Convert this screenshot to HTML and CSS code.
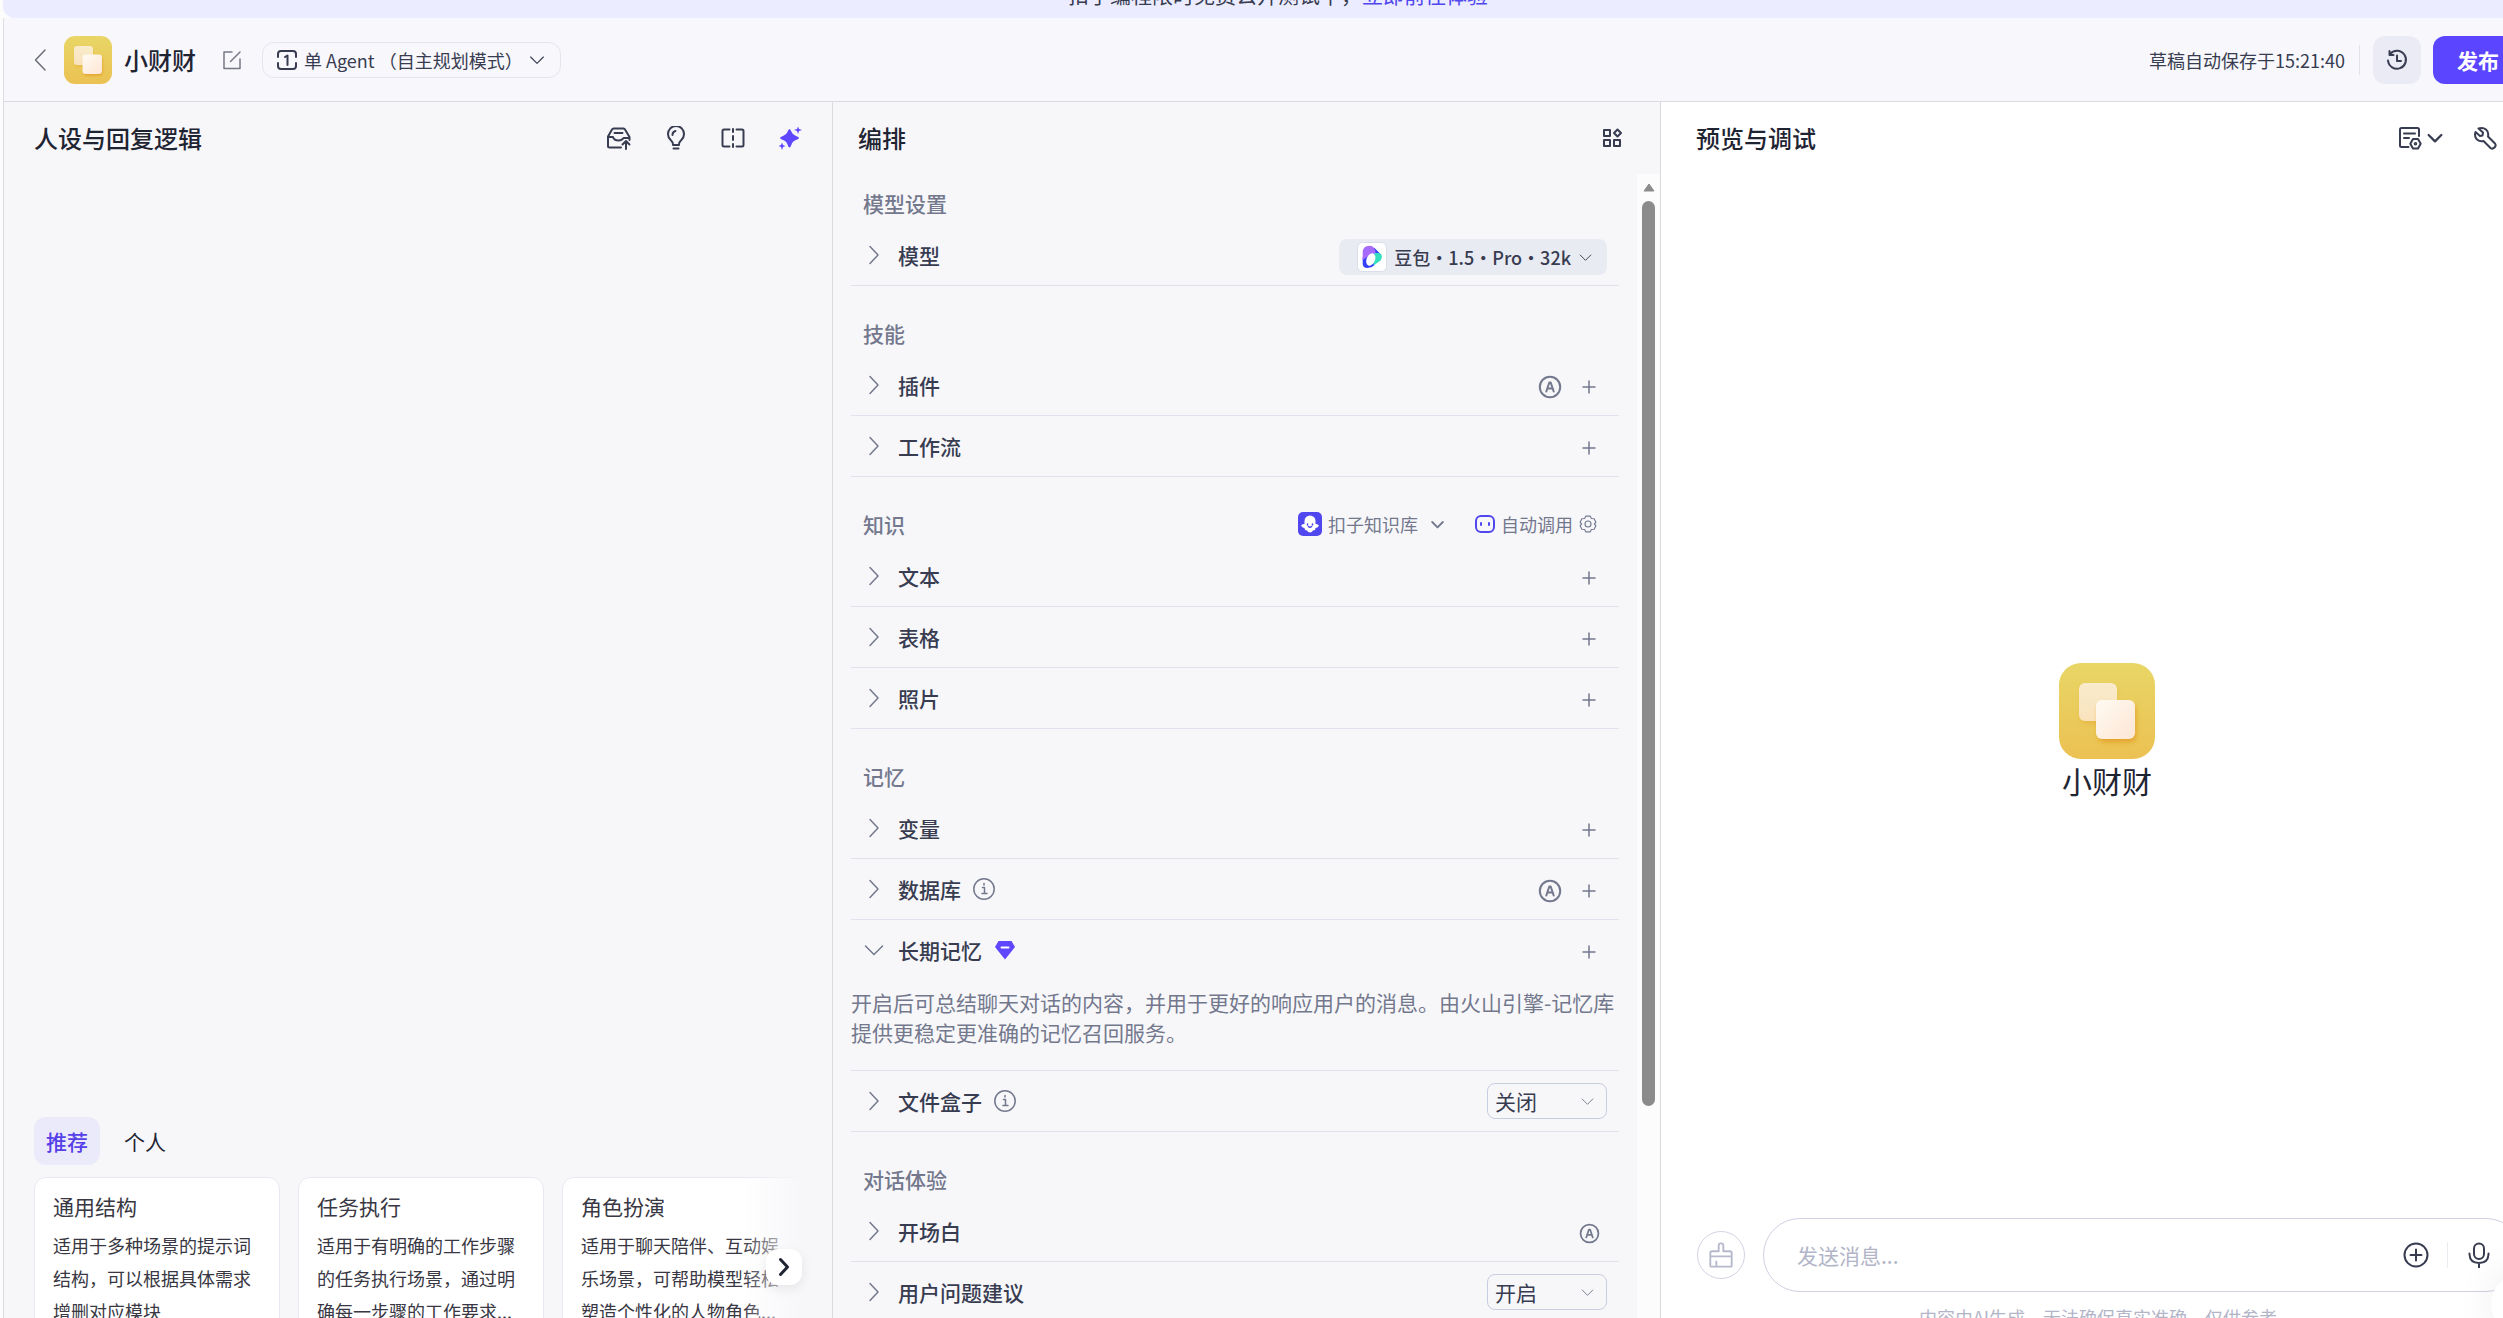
FILE: index.html
```html
<!DOCTYPE html>
<html lang="zh-CN">
<head>
    <meta charset="UTF-8">
    <meta name="viewport" content="width=device-width, initial-scale=1.0">
    <title>小财财</title>
    <link rel="stylesheet" href="styles.css">
</head>
<body>
<!-- shared icons -->
<svg class="sprite" aria-hidden="true">
    <symbol id="right" viewBox="0 0 24 24"><path d="M8 3.500L16 12L8 20.500"/></symbol>
    <symbol id="down" viewBox="0 0 24 24"><path d="M3.500 8L12 16.500L20.500 8"/></symbol>
    <symbol id="plus" viewBox="0 0 24 24"><path d="M12 6v12M6 12h12"/></symbol>
    <symbol id="auto" viewBox="0 0 24 24"><circle cx="12" cy="12" r="10.200"/><path d="M8.300 16.500L11.300 7.500h1.400L15.700 16.500M9.500 13.500h5"/></symbol>
    <symbol id="info" viewBox="0 0 24 24"><circle cx="12" cy="12" r="10.200"/><path d="M10.500 10.500H12.500V16.500M10 16.500h5M12 6.500v1.600"/></symbol>
    <symbol id="bot" viewBox="0 0 96 96">
        <rect width="96" height="96" rx="22" fill="url(#gold)" stroke="none"/>
        <rect x="22" y="24" width="36" height="37" rx="6" fill="#e59a20" stroke="none" opacity=".35" filter="url(#soft)"/>
        <rect x="20" y="20" width="38" height="38" rx="6" fill="url(#cream)" stroke="none"/>
        <rect x="39" y="41" width="38" height="38" rx="6" fill="#e08a10" stroke="none" opacity=".6" filter="url(#soft)"/>
        <rect x="37" y="37" width="39" height="39" rx="6" fill="url(#milk)" stroke="none"/>
    </symbol>
    <defs>
        <linearGradient id="gold" x1="0" y1="0" x2="0" y2="1"><stop offset="0" stop-color="#e8d666"/><stop offset="1" stop-color="#ebc152"/></linearGradient>
        <linearGradient id="cream" x1="0" y1="0" x2="0" y2="1"><stop offset="0" stop-color="#f8ebcb"/><stop offset="1" stop-color="#f9e3bd"/></linearGradient>
        <linearGradient id="milk" x1="0" y1="0" x2="1" y2="1"><stop offset="0" stop-color="#fffaf3"/><stop offset="1" stop-color="#fde6d4"/></linearGradient>
        <filter id="soft" x="-30%" y="-30%" width="160%" height="160%"><feGaussianBlur stdDeviation="2.500"/></filter>
    </defs>
</svg>

<div class="page">
    <div class="banner">扣子编程限时免费公开测试中，<a href="#">立即前往体验</a></div>

    <header class="topbar">
        <button class="icon-btn back" aria-label="返回"><svg class="icon" viewBox="0 0 24 24"><path d="M17 2L7.500 12L17 22"/></svg></button>
        <svg class="logo"><use href="#bot"/></svg>
        <h1>小财财</h1>
        <button class="icon-btn edit" aria-label="编辑"><svg class="icon" viewBox="0 0 24 24"><path d="M12 4H4v16.500h16V11M10.500 13.500L20 4"/></svg></button>
        <button class="mode">
            <svg class="icon thick" viewBox="0 0 24 24"><path d="M3 9V6a3 3 0 0 1 3-3h12a3 3 0 0 1 3 3v3M3 15v3a3 3 0 0 0 3 3h12a3 3 0 0 0 3-3v-3M10 9l2.500-1.500V17"/></svg>
            <span>单 Agent （自主规划模式）</span>
            <svg class="icon small"><use href="#down"/></svg>
        </button>
        <span class="saved">草稿自动保存于15:21:40</span>
        <button class="history" aria-label="历史版本"><svg class="icon thick" viewBox="0 0 24 24"><path d="M5 6A9 9 0 1 1 3 12.500M4.500 3v4H8.500M12 7.500V13h4"/></svg></button>
        <button class="publish">发布</button>
    </header>

    <main class="columns">
        <section class="col persona">
            <div class="col-head">
                <h2>人设与回复逻辑</h2>
                <div class="tools">
                    <button class="icon-btn" aria-label="提示词库"><svg class="icon thick" viewBox="0 0 24 24"><path d="M14 21.500H2.500a1.500 1.500 0 0 1-1.500-1.500V10.500L5 3.500q.5-1 1.500-1h10q1 0 1.500 1l4.500 7.500v3M1 11h5q1 3.500 5.500 3.500 3.500 0 5-2.500h6M7.500 7h8M19 23V15.500M15.500 18.500l3.500-3.500 3.500 3.500"/></svg></button>
                    <button class="icon-btn" aria-label="建议"><svg class="icon thick" viewBox="0 0 24 24"><path d="M9 19q0-3-2.500-5.200a8 8 0 1 1 11 0Q15 16 15 19zM9.500 22.500h5M8.500 9a4 4 0 0 1 3-4"/></svg></button>
                    <button class="icon-btn" aria-label="对比"><svg class="icon thick" viewBox="0 0 24 24"><path d="M8.500 3.500H3a1.500 1.500 0 0 0-1.500 1.500v14A1.500 1.500 0 0 0 3 20.500h5.500M15.500 3.500H21A1.500 1.500 0 0 1 22.500 5v14a1.500 1.500 0 0 1-1.500 1.500h-5.500M12 3v3M12 10v4M12 18v3"/></svg></button>
                    <button class="icon-btn" aria-label="优化"><svg class="icon solid" viewBox="0 0 24 24"><path d="M11.500 3Q12.500 3 13.300 5.500Q14.500 8.800 18 10Q21 11 21 12T18 14Q14.500 15.200 13.300 19Q12.500 21.500 11.500 21.500T9.700 19Q8.500 15.200 5 14Q2 13 2 12T5 10Q8.500 8.800 9.700 5.500Q10.500 3 11.500 3ZM20 0.500L21 3L24 4L21 5L20 8L19 5L16 4L19 3ZM4 16.500L5 19L7.500 20L5 21L4 24L3 21L0.500 20L3 19Z"/></svg></button>
                </div>
            </div>
            <div class="templates">
                <div class="tabs">
                    <button class="tab active">推荐</button>
                    <button class="tab">个人</button>
                </div>
                <div class="card-area">
                    <div class="cards">
                        <article class="card"><h3>通用结构</h3><p>适用于多种场景的提示词结构，可以根据具体需求增删对应模块</p></article>
                        <article class="card"><h3>任务执行</h3><p>适用于有明确的工作步骤的任务执行场景，通过明确每一步骤的工作要求...</p></article>
                        <article class="card"><h3>角色扮演</h3><p>适用于聊天陪伴、互动娱乐场景，可帮助模型轻松塑造个性化的人物角色...</p></article>
                    </div>
                    <button class="next" aria-label="下一页"><svg class="icon" viewBox="0 0 24 24"><path d="M8.500 4.500L15.500 12L8.500 19.500"/></svg></button>
                </div>
            </div>
        </section>

        <section class="col arrange">
            <div class="col-head">
                <h2>编排</h2>
                <button class="icon-btn" aria-label="布局"><svg class="icon thick" viewBox="0 0 24 24"><path d="M4 4h6v6H4zM4 14h6v6H4zM14 14h6v6h-6zM17.500 3.500L21 7L17.500 10.500L14 7Z"/></svg></button>
            </div>
            <div class="scroll">
                <div class="list">
                    <div class="group"><h3>模型设置</h3></div>
                    <div class="row">
                        <svg class="icon"><use href="#right"/></svg><h4>模型</h4>
                        <button class="model">
                            <svg class="model-logo" viewBox="0 0 30 30">
                                <rect x=".5" y=".5" width="29" height="29" rx="5" fill="#fff" stroke="#d9dcea"/>
                                <path d="M17 5.500L24.500 13 16 14z" fill="#3540fa"/>
                                <path d="M5.700 15v6.500q0 4.500 5 4.500 4 0 7-3L12 13z" fill="#3540fa"/>
                                <path d="M5.700 18V10.500Q5.700 3.700 12.500 3.700q4 0 5.500 4.300l1 4-6 1z" fill="#a66bfb"/>
                                <path d="M17.500 11h4.500q3 1.500 3 4t-3.500 5L16.500 23.500z" fill="#34dfc0"/>
                                <ellipse cx="13.800" cy="17.500" rx="4.200" ry="6.500" fill="#fff" transform="rotate(22 13.800 17.500)"/>
                            </svg>
                            <span>豆包・1.5・Pro・32k</span>
                            <svg class="icon tiny"><use href="#down"/></svg>
                        </button>
                    </div>

                    <div class="group"><h3>技能</h3></div>
                    <div class="row">
                        <svg class="icon"><use href="#right"/></svg><h4>插件</h4>
                        <button class="act" aria-label="自动添加"><svg class="icon thick"><use href="#auto"/></svg></button>
                        <button class="act" aria-label="添加"><svg class="icon"><use href="#plus"/></svg></button>
                    </div>
                    <div class="row">
                        <svg class="icon"><use href="#right"/></svg><h4>工作流</h4>
                        <button class="act" aria-label="添加"><svg class="icon"><use href="#plus"/></svg></button>
                    </div>

                    <div class="group">
                        <h3>知识</h3>
                        <button class="kb">
                            <svg class="icon" viewBox="0 0 24 24"><rect width="24" height="24" rx="5" fill="#5147ee" stroke="none"/><path d="M12 3.500a5.500 5.500 0 0 0-5.500 5.500v3q-2-.5-3.500 1.500 1.500 2.500 3.500 2.500 0 2.500 2.500 2.500 1 2 3 2t3-2q2.500 0 2.500-2.500 2 0 3.500-2.500-1.500-2-3.500-1.500V9a5.500 5.500 0 0 0-5.500-5.500z" fill="#fff" stroke="none"/><path d="M9.500 12v1M14.500 12v1M10.500 14.500q1.500 1.500 3 0" stroke="#5147ee"/></svg>
                            <span>扣子知识库</span>
                            <svg class="icon tiny bold"><use href="#down"/></svg>
                        </button>
                        <button class="call">
                            <svg class="icon thick" viewBox="0 0 20 20"><rect x="1" y="2" width="18" height="16" rx="5"/><path d="M6 9v2M14 9v2"/></svg>
                            <span>自动调用</span>
                            <svg class="icon gear" viewBox="0 0 24 24"><path d="M9 1.500h6l1.500 3.200 3.700.3 2.300 4.800-2 2.200 2 2.200-2.300 4.800-3.700.3L15 22.500H9l-1.500-3.200-3.700-.3-2.300-4.800 2-2.200-2-2.200L3.800 5l3.700-.3z"/><circle cx="12" cy="12" r="4"/></svg>
                        </button>
                    </div>
                    <div class="row">
                        <svg class="icon"><use href="#right"/></svg><h4>文本</h4>
                        <button class="act" aria-label="添加"><svg class="icon"><use href="#plus"/></svg></button>
                    </div>
                    <div class="row">
                        <svg class="icon"><use href="#right"/></svg><h4>表格</h4>
                        <button class="act" aria-label="添加"><svg class="icon"><use href="#plus"/></svg></button>
                    </div>
                    <div class="row">
                        <svg class="icon"><use href="#right"/></svg><h4>照片</h4>
                        <button class="act" aria-label="添加"><svg class="icon"><use href="#plus"/></svg></button>
                    </div>

                    <div class="group"><h3>记忆</h3></div>
                    <div class="row">
                        <svg class="icon"><use href="#right"/></svg><h4>变量</h4>
                        <button class="act" aria-label="添加"><svg class="icon"><use href="#plus"/></svg></button>
                    </div>
                    <div class="row">
                        <svg class="icon"><use href="#right"/></svg><h4>数据库 <svg class="icon"><use href="#info"/></svg></h4>
                        <button class="act" aria-label="自动添加"><svg class="icon thick"><use href="#auto"/></svg></button>
                        <button class="act" aria-label="添加"><svg class="icon"><use href="#plus"/></svg></button>
                    </div>
                    <div class="row open">
                        <svg class="icon"><use href="#down"/></svg><h4>长期记忆 <svg class="icon gem" viewBox="0 0 24 24"><path d="M5.500 3h13l3.500 6L12 21.500 2 9z" fill="#5e47ff" stroke="none"/><path d="M8.500 9.500h7" stroke="#fff" stroke-width="2"/></svg></h4>
                        <button class="act" aria-label="添加"><svg class="icon"><use href="#plus"/></svg></button>
                    </div>
                    <p class="note">开启后可总结聊天对话的内容，并用于更好的响应用户的消息。由火山引擎-记忆库提供更稳定更准确的记忆召回服务。</p>
                    <div class="row">
                        <svg class="icon"><use href="#right"/></svg><h4><label for="filebox">文件盒子</label> <svg class="icon"><use href="#info"/></svg></h4>
                        <div class="select">
                            <select id="filebox"><option>关闭</option><option>开启</option></select>
                            <svg class="icon tiny"><use href="#down"/></svg>
                        </div>
                    </div>

                    <div class="group"><h3>对话体验</h3></div>
                    <div class="row">
                        <svg class="icon"><use href="#right"/></svg><h4>开场白</h4>
                        <button class="act" aria-label="自动生成"><svg class="icon mid thick"><use href="#auto"/></svg></button>
                    </div>
                    <div class="row">
                        <svg class="icon"><use href="#right"/></svg><h4><label for="suggest">用户问题建议</label></h4>
                        <div class="select">
                            <select id="suggest"><option>开启</option><option>关闭</option></select>
                            <svg class="icon tiny"><use href="#down"/></svg>
                        </div>
                    </div>
                </div>
                <div class="track">
                    <svg class="up" viewBox="0 0 12 9"><path d="M6 1L11 8H1z"/></svg>
                    <div class="thumb"></div>
                </div>
            </div>
        </section>

        <section class="col preview">
            <div class="col-head">
                <h2>预览与调试</h2>
                <button class="icon-btn doc" aria-label="预览设置">
                    <svg class="icon thick" viewBox="0 0 24 24"><path d="M10.500 21H3.500A1.500 1.500 0 0 1 2 19.500v-16A1.500 1.500 0 0 1 3.500 2h16A1.500 1.500 0 0 1 21 3.500V10M6 7.500h11M6 12h5M15 13h5l2.700 4.700L20 22.500h-5l-2.700-4.800z"/><circle cx="17.500" cy="17.700" r=".8"/></svg>
                    <svg class="icon small bold"><use href="#down"/></svg>
                </button>
                <button class="icon-btn" aria-label="调试"><svg class="icon thick" viewBox="0 0 24 24"><path d="M5.500 2.500L10 6.500 9.500 9.500 7 10 2.500 6Q1 10.500 4 13.500 7 16 10.500 15L17.500 22Q19.500 23.500 21.500 21.500 23.500 19.500 22 17.500L15 10.500Q16 6 13 3.500 10 1 5.500 2.500Z"/></svg></button>
            </div>
            <div class="hello">
                <svg class="big-logo"><use href="#bot"/></svg>
                <p>小财财</p>
            </div>
            <div class="chat">
                <button class="clear" aria-label="清空"><svg class="icon" viewBox="0 0 28 28"><path d="M11.500 10V3.500Q11.500 1.500 14 1.500T16.500 3.500V10H23.500Q25.500 10 25.500 12V25.500Q25.500 26.500 24.500 26.500H3.500Q2.500 26.500 2.500 25.500V12Q2.500 10 4.500 10ZM2.500 15.500H25.500M9 21v5"/></svg></button>
                <div class="box">
                    <input type="text" placeholder="发送消息..." aria-label="发送消息">
                    <button class="icon-btn add" aria-label="附件"><svg class="icon" viewBox="0 0 26 26"><circle cx="13" cy="13" r="11.500"/><path d="M13 7.500v11M7.500 13h11"/></svg></button>
                    <button class="icon-btn mic" aria-label="语音"><svg class="icon" viewBox="0 0 26 26"><rect x="8" y="1.500" width="10" height="15.500" rx="5"/><path d="M3.500 11.500v1q.5 8.500 9.500 8.500t9.500-8.500v-1M13 21v4.500"/></svg></button>
                </div>
            </div>
            <p class="tip">内容由AI生成，无法确保真实准确，仅供参考</p>
        </section>
    </main>
</div>
<button class="float" aria-label="帮助"></button>
</body>
</html>
```

FILE: styles.css
```css
*{
    box-sizing: border-box;
    margin: 0;
    padding: 0;
}
body{
    height: 100vh;
    overflow: hidden;
    background: #fcfcfd;
    color: #1f2433;
    font-family: "Noto Sans CJK SC", "Noto Sans", sans-serif;
    font-size: 21px;
    line-height: 30px;
}
button, input, select{
    border: 0;
    background: none;
    color: inherit;
    font: inherit;
}
button{
    cursor: pointer;
    flex: none;
}
h1, h2{
    font-size: 24px; font-weight: 500;
    line-height: 36px;
}
h3{
    font-size: 21px; font-weight: 500;
}
.sprite{
    position: absolute;
    width: 0; height: 0;
}
.icon{
    display: block;
    flex: none;
    width: 24px; height: 24px;
    fill: none;
    stroke: currentColor;
    stroke-width: 1.5;
    stroke-linecap: round;
    stroke-linejoin: round;
}
.thick{ stroke-width: 2; }
.bold{ stroke-width: 3; }
.mid{ width: 21px; height: 21px; }
.small{ width: 18px; height: 18px; }
.tiny{ width: 15px; height: 15px; }
.solid{
    fill: #5e47ff;
    stroke: none;
}
.icon-btn{
    display: flex; align-items: center;
    color: #383c50;
}

/* page runs past the window on the right and bottom */
.page{
    display: flex; flex-direction: column;
    width: calc(100% + 50px);
    height: calc(100vh + 60px);
    margin-top: -27px;
    padding-left: 3px;
}
.banner{
    flex: none;
    height: 45px;
    line-height: 42px;
    border-radius: 0 0 0 12px;
    background: #ebecff;
    color: #383c50;
    text-align: center;
}
.banner a{
    color: #5147ee;
    text-decoration: none;
}

/* top bar */
.topbar{
    display: flex; align-items: center;
    flex: none;
    height: 84px;
    padding: 0 30px 0 24px;
    border-left: 1px solid #dddee4;
    border-bottom: 1px solid #dadbe0;
    background: #f7f7fc;
}
.back{
    color: #6b6d78;
}
.logo{
    width: 48px; height: 48px;
    margin: 0 12px;
}
.edit{
    margin: 0 18px 0 24px;
    color: #777985;
}
.mode{
    display: flex; align-items: center; gap: 5px;
    height: 36px;
    padding: 0 14px 0 12px;
    border: 1px solid #e5e5ed;
    border-radius: 12px;
    color: #383c50;
    font-size: 18px;
}
.saved{
    margin-left: auto;
    padding-right: 14px;
    border-right: 1px solid #e2e2ea;
    color: #383c50;
    font-size: 18px;
}
.history{
    display: flex; align-items: center; justify-content: center;
    width: 48px; height: 48px;
    margin: 0 12px 0 13px;
    border-radius: 12px;
    background: #ebebf5;
    color: #383c50;
}
.publish{
    height: 48px;
    padding: 0 24px;
    border-radius: 12px;
    background: #5b45ff;
    color: #fff;
    font-weight: 700;
    line-height: 28px;
}

/* three columns */
.columns{
    display: grid;
    grid-template-columns: minmax(0, 829fr) minmax(0, 828fr) minmax(0, 893fr);
    flex: 1;
    min-height: 0;
}
.col{
    display: flex; flex-direction: column;
    min-height: 0;
    border-left: 1px solid #dadbe0;
    background: #f7f7fa;
}
.col-head{
    display: flex; align-items: center; justify-content: space-between;
    flex: none;
    height: 72px;
}

/* persona */
.persona{
    padding: 0 30px;
    justify-content: space-between;
}
.tools{
    display: flex;
    gap: 33px;
}
.tabs{
    display: flex;
    gap: 12px;
    margin-bottom: 12px;
}
.tab{
    height: 48px;
    padding: 0 12px;
    border-radius: 12px;
}
.tab.active{
    background: #ebeafa;
    color: #5640e8;
    font-weight: 500;
}
.card-area{
    position: relative;
}
.cards{
    display: flex;
    gap: 18px;
    overflow: hidden;
}
.card{
    flex: 0 0 246px;
    height: 174px;
    padding: 13px 18px;
    border: 1px solid #e8e8f0;
    border-radius: 12px;
    background: #fff;
    color: #383743;
}
.card h3{
    margin-bottom: 8px;
    font-weight: 400;
}
.card p{
    font-size: 18px;
    line-height: 33px;
}
.card-area::after{
    content: "";
    position: absolute; top: 0; right: 0; bottom: 0;
    width: 60px;
    background: linear-gradient(to right, rgba(247, 247, 250, 0), #f7f7fa);
}
.next{
    position: absolute; top: 72px; right: 0;
    z-index: 1;
    display: flex; align-items: center; justify-content: center;
    width: 36px; height: 36px;
    border-radius: 12px;
    background: #fff;
    box-shadow: 0 4px 12px rgba(0, 0, 0, 0.08);
}
.next .icon{ stroke-width: 3; }

/* arrange */
.arrange .col-head{
    padding: 0 36px 0 25px;
}
.scroll{
    display: flex;
    flex: 1;
    min-height: 0;
}
.list{
    flex: 1;
    min-width: 0;
    overflow: hidden;
    padding: 0 18px;
}
.group{
    display: flex; align-items: center;
    padding: 32px 22px 7px 12px;
    color: #73788d;
}
.group:first-child{
    padding-top: 14px;
}
.group h3{
    margin-right: auto;
}
.row{
    display: flex; align-items: center;
    height: 61px;
    padding: 0 12px 0 11px;
    border-bottom: 1px solid #e1e2ec;
    color: #73788d;
}
.row.open{
    height: 60px;
    border-bottom: 0;
}
.row h4{
    display: flex; align-items: center; gap: 11px;
    margin: 0 auto 0 12px;
    color: #383c50;
    font-size: 21px; font-weight: 500;
}
.row h4 .icon{
    color: #73788d;
}
.act{
    display: flex; align-items: center; justify-content: center;
    width: 36px; height: 36px;
    margin: 4px 0 0 3px;
}
.model{
    display: flex; align-items: center; gap: 7px;
    height: 36px;
    margin-top: 4px;
    padding: 0 14px 0 18px;
    border-radius: 8px;
    background: #e9ebf3;
    color: #383c50;
    font-size: 18px; font-weight: 500;
}
.model-logo{
    width: 30px; height: 30px;
}
.kb, .call{
    display: flex; align-items: center; gap: 6px;
    font-size: 18px;
}
.kb span{
    margin-right: 6px;
}
.call{
    margin-left: 30px;
}
.call .icon{
    width: 20px; height: 20px;
    color: #5147ee;
}
.call .gear{
    width: 18px; height: 18px;
    color: #73788d;
}
.note{
    padding: 7px 0 23px;
    border-bottom: 1px solid #e1e2ec;
    color: #73788d;
}
.select{
    display: grid;
    align-items: center;
    width: 120px; height: 36px;
    color: #383c50;
}
.select select, .select .icon{
    grid-area: 1 / 1;
}
.select select{
    width: 100%; height: 36px;
    padding: 0 7px;
    border: 1px solid #c9cde0;
    border-radius: 8px;
    appearance: none;
}
.select .icon{
    justify-self: end;
    margin-right: 12px;
    color: #73788d;
    pointer-events: none;
}
.track{
    display: flex; flex-direction: column; align-items: center;
    flex: none;
    width: 23px;
    padding-top: 9px;
    background: #fcfcfc;
}
.up{
    flex: none;
    width: 12px; height: 9px;
    margin-bottom: 9px;
    fill: #8b8b8b;
    stroke: #8b8b8b;
    stroke-linejoin: round;
}
.thumb{
    width: 13px; height: calc(77% + 6px);
    border-radius: 7px;
    background: #8b8b8b;
}

/* preview */
.preview{
    background: #fff;
}
.preview .col-head{
    padding: 0 56px 0 35px;
}
.preview h2{
    margin-right: auto;
}
.doc{
    gap: 4px;
    margin-right: 29px;
}
.hello{
    display: flex; flex-direction: column; align-items: center; justify-content: center;
    flex: 1;
    padding-top: 72px;
}
.big-logo{
    width: 96px; height: 96px;
}
.hello p{
    font-size: 30px;
    line-height: 42px;
}
.chat{
    display: flex; align-items: center; gap: 18px;
    padding: 0 30px 0 36px;
}
.clear{
    display: flex; align-items: center; justify-content: center;
    width: 48px; height: 48px;
    border: 1px solid #d3d4e3;
    border-radius: 50%;
    color: #b6b9cc;
}
.clear .icon{
    width: 26px; height: 26px;
    stroke-width: 2;
}
.box{
    display: flex; align-items: center;
    flex: 1;
    height: 74px;
    padding: 0 30px 0 33px;
    border: 1px solid #d0d0e2;
    border-radius: 37px;
}
.box input{
    flex: 1;
    min-width: 0;
    outline: 0;
}
.box input::placeholder{
    color: #b2b5c8;
}
.box .icon{
    width: 26px; height: 26px;
    stroke-width: 2;
}
.add{
    padding-right: 18px;
}
.mic{
    padding-left: 18px;
    border-left: 1px solid #ebebf2;
}
.tip{
    padding: 13px 18px 22px 0;
    color: #b2b5c8;
    font-size: 18px;
    line-height: 24px;
    text-align: center;
}
.float{
    position: fixed; right: -48px; bottom: -16px;
    width: 60px; height: 60px;
    border-radius: 50%;
    background: #fff;
    box-shadow: 0 0 42px rgba(0, 0, 0, 0.08);
}
```
